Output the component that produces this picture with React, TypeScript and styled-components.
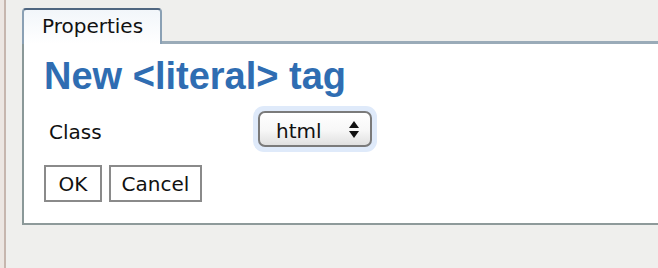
import React from "react";
import styled, { createGlobalStyle } from "styled-components";

const Global = createGlobalStyle`
  html, body { margin: 0; padding: 0; background: #efefed; }
  body { width: 658px; height: 268px; overflow: hidden; }
`;

const Page = styled.div`
  position: relative;
  width: 658px;
  height: 268px;
  display: flex;
  background: #efefed;
  font-family: "DejaVu Sans", Verdana, sans-serif;
`;

const Edge = styled.div`
  width: 4px;
  background: #ece6e2;
  border-right: 2px solid #c6b6ae;
  flex: none;
`;

const Main = styled.div`
  flex: 1;
  padding: 8px 0 0 16px;
  display: flex;
  flex-direction: column;
  min-width: 0;
`;

const TabBar = styled.div`
  display: flex;
  height: 33px;
  position: relative;
  z-index: 1;
`;

const Tab = styled.div`
  width: 140px;
  height: 36px;
  box-sizing: border-box;
  border: 2px solid #8aa0b4;
  border-top: 2px solid #4f6680;
  border-bottom: none;
  border-radius: 4px 4px 0 0;
  background: linear-gradient(#f2f6fa, #ffffff);
  font-size: 20px;
  color: #111;
  padding: 4px 0 0 18px;
`;

const Panel = styled.div`
  margin-right: -20px;
  height: 184px;
  box-sizing: border-box;
  background: #fff;
  border-top: 3px solid #9aabb8;
  border-left: 2px solid #8a9898;
  border-bottom: 2px solid #8e9a9a;
  padding: 10px 0 0 20px;
`;

const Title = styled.h1`
  margin: 0;
  font-family: "Liberation Sans", Arial, sans-serif;
  font-weight: bold;
  font-size: 38px;
  line-height: 44px;
  color: #2f6db2;
`;

const Row = styled.div`
  display: flex;
  align-items: center;
  margin-top: 8px;
  height: 46px;
`;

const Label = styled.div`
  width: 204px;
  padding: 5px 0 0 5px;
  font-size: 20px;
  color: #111;
`;

const FocusRing = styled.div`
  padding: 5px;
  border-radius: 11px;
  background: #dfeafa;
`;

const Select = styled.div`
  width: 114px;
  height: 36px;
  box-sizing: border-box;
  border: 2px solid #7a7a7a;
  border-radius: 7px;
  background: linear-gradient(#ffffff 0%, #f7f7f7 55%, #e0e0e0 100%);
  display: flex;
  align-items: center;
  justify-content: space-between;
  padding: 3px 11px 0 16px;
  font-size: 20px;
  color: #111;
`;

const Buttons = styled.div`
  display: flex;
  gap: 7px;
  margin-top: 13px;
`;

const Button = styled.button<{ $w: number }>`
  width: ${(p) => p.$w}px;
  height: 37px;
  box-sizing: border-box;
  border: 2px solid #8a8a8a;
  background: #fff;
  font-family: "DejaVu Sans", Verdana, sans-serif;
  font-size: 20px;
  color: #111;
  padding: 0;
`;

const Arrows = () => (
  <svg width="10" height="17" viewBox="0 0 10 17" style={{ marginTop: -3 }}>
    <path d="M5 0 L10 7 H0 Z" fill="#111" />
    <path d="M0 10 H10 L5 17 Z" fill="#111" />
  </svg>
);

export default function App() {
  return (
    <Page>
      <Global />
      <Edge />
      <Main>
        <TabBar>
          <Tab>Properties</Tab>
        </TabBar>
        <Panel>
          <Title>New &lt;literal&gt; tag</Title>
          <Row>
            <Label>Class</Label>
            <FocusRing>
              <Select>
                <span>html</span>
                <Arrows />
              </Select>
            </FocusRing>
          </Row>
          <Buttons>
            <Button $w={58}>OK</Button>
            <Button $w={93}>Cancel</Button>
          </Buttons>
        </Panel>
      </Main>
    </Page>
  );
}
